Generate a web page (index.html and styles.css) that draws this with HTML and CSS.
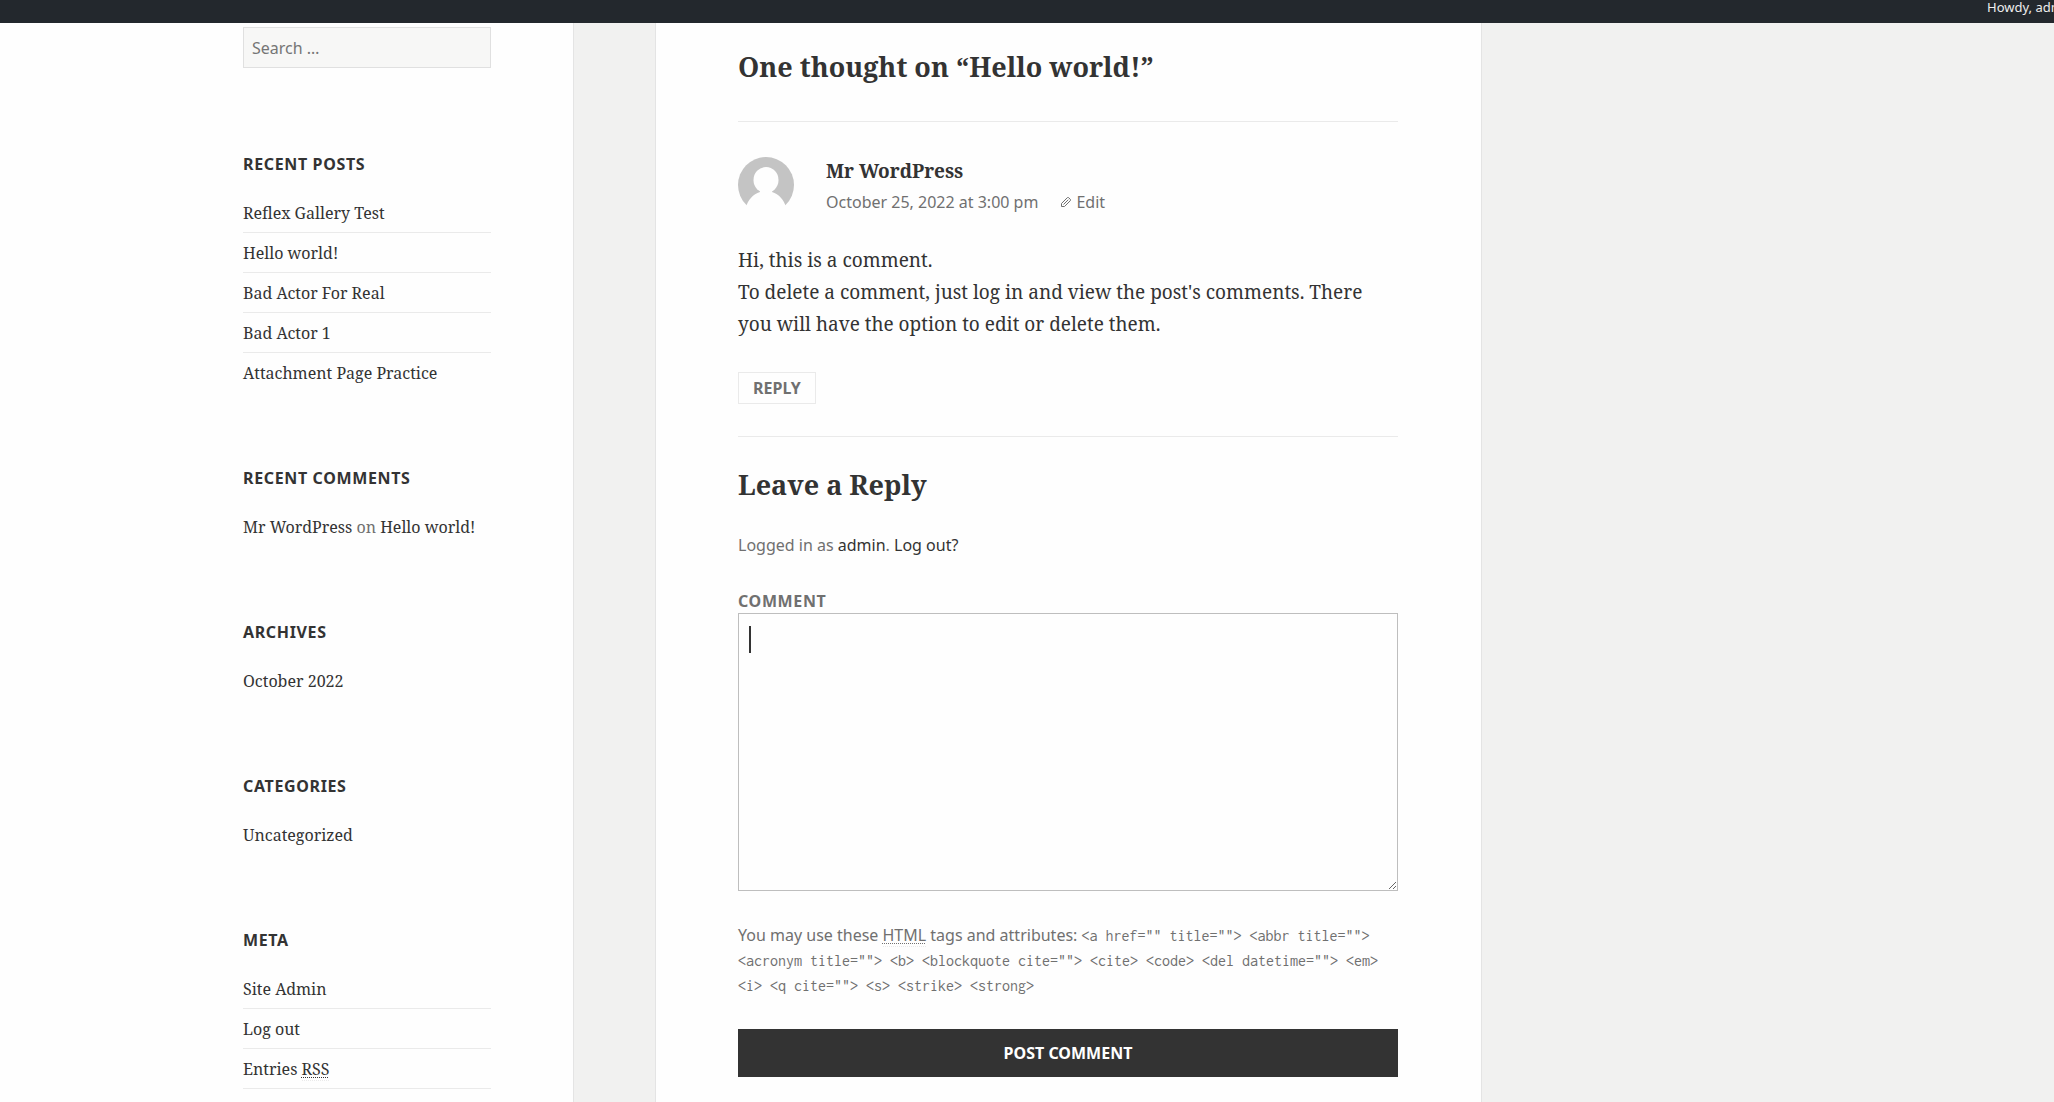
FILE: index.html
```html
<!DOCTYPE html>
<html lang="en">
<head>
<meta charset="utf-8">
<title>Hello world!</title>
<link rel="stylesheet" href="styles.css">
</head>
<body>
<header class="admin-bar"><a class="account" href="#">Howdy, admin</a></header>
<div class="site">
  <aside class="sidebar">
    <form class="search"><input class="search-field" type="search" placeholder="Search …" aria-label="Search for:"></form>
    <section class="widget">
      <h2 class="widget-title">Recent Posts</h2>
      <ul class="widget-list">
        <li><a href="#">Reflex Gallery Test</a></li>
        <li><a href="#">Hello world!</a></li>
        <li><a href="#">Bad Actor For Real</a></li>
        <li><a href="#">Bad Actor 1</a></li>
        <li><a href="#">Attachment Page Practice</a></li>
      </ul>
    </section>
    <section class="widget">
      <h2 class="widget-title">Recent Comments</h2>
      <ul class="widget-list">
        <li><a href="#">Mr WordPress</a> on <a href="#">Hello world!</a></li>
      </ul>
    </section>
    <section class="widget">
      <h2 class="widget-title">Archives</h2>
      <ul class="widget-list">
        <li><a href="#">October 2022</a></li>
      </ul>
    </section>
    <section class="widget">
      <h2 class="widget-title">Categories</h2>
      <ul class="widget-list">
        <li><a href="#">Uncategorized</a></li>
      </ul>
    </section>
    <section class="widget">
      <h2 class="widget-title">Meta</h2>
      <ul class="widget-list widget-list-open">
        <li><a href="#">Site Admin</a></li>
        <li><a href="#">Log out</a></li>
        <li><a href="#">Entries <abbr>RSS</abbr></a></li>
      </ul>
    </section>
  </aside>
  <main class="content">
    <h2 class="section-title">One thought on “Hello world!”</h2>
    <article class="comment">
      <header class="comment-meta">
        <svg class="avatar" viewBox="0 0 56 56" aria-hidden="true">
          <circle cx="28" cy="28" r="28" fill="#c4c4c4"/>
          <ellipse cx="28" cy="23" rx="12.500" ry="13" fill="#fefefe"/>
          <path d="M22 32h12v3c7 2 12 8 14 15l-6 6H14l-6-6c2-7 7-13 14-15z" fill="#fefefe"/>
        </svg>
        <div class="comment-byline">
          <b class="author">Mr WordPress</b>
          <div class="comment-info">
            <a href="#">October 25, 2022 at 3:00 pm</a>
            <a class="edit" href="#"><svg class="pencil" viewBox="0 0 12 12" aria-hidden="true"><path d="M1.500 10.500V7.500L7.300 1.700q.7-.7 1.400 0l1.600 1.600q.7.700 0 1.400L4.500 10.500zM3.500 8.500L8.300 3.700" fill="none" stroke="#707070"/></svg>Edit</a>
          </div>
        </div>
      </header>
      <p class="comment-text">Hi, this is a comment.<br>To delete a comment, just log in and view the post's comments. There you will have the option to edit or delete them.</p>
      <a class="reply" href="#">Reply</a>
    </article>
    <form class="respond">
      <h3 class="reply-title">Leave a Reply</h3>
      <p class="logged-in">Logged in as <a href="#">admin</a>. <a href="#">Log out?</a></p>
      <label class="comment-label" for="comment">Comment</label>
      <div class="comment-field"><textarea class="comment-box" id="comment"></textarea><span class="caret"></span></div>
      <p class="allowed">You may use these <abbr>HTML</abbr> tags and attributes: <code>&lt;a href="" title=""&gt; &lt;abbr title=""&gt; &lt;acronym title=""&gt; &lt;b&gt; &lt;blockquote cite=""&gt; &lt;cite&gt; &lt;code&gt; &lt;del datetime=""&gt; &lt;em&gt; &lt;i&gt; &lt;q cite=""&gt; &lt;s&gt; &lt;strike&gt; &lt;strong&gt;</code></p>
      <button class="submit" type="button">Post Comment</button>
    </form>
  </main>
</div>
</body>
</html>
```
FILE: styles.css
```css
*, *::before, *::after { box-sizing: border-box; }

html, body { height: 100%; }

body {
  display: flex;
  flex-direction: column;
  margin: 0;
  overflow: hidden;
  background: #f1f1f0;
  color: #333;
  font: 16px/24px "Noto Serif", "DejaVu Serif Condensed", "DejaVu Serif", serif;
}

a { color: inherit; text-decoration: none; }
h2, h3, p, ul { margin: 0; padding: 0; }

abbr {
  border-bottom: 1px dotted #eaeaea;
  text-decoration: underline dotted 1px;
  text-decoration-skip-ink: none;
  text-underline-offset: 2px;
}

.admin-bar {
  display: flex;
  flex: none;
  justify-content: flex-end;
  height: 23px;
  overflow: hidden;
  background: #23282d;
}

.account {
  width: 67px;
  color: #eee;
  font: 13px/14px "Noto Sans", sans-serif;
  white-space: nowrap;
}

.site {
  display: grid;
  flex: 1;
  grid-template-columns: 574fr 81fr 827fr 572fr;
  min-height: 0;
}

.sidebar {
  padding: 4px 82px 0 243px;
  border-right: 1px solid #e4e4e4;
  background: #fefefe;
}

.search-field {
  display: block;
  width: 100%;
  height: 41px;
  margin: 0 0 84px;
  padding: 0 8px;
  border: 1px solid #e0e0e0;
  border-radius: 0;
  background: #f7f7f6;
  font: 16px/24px "Noto Sans", sans-serif;
}
.search-field::placeholder { color: #757575; }

.widget + .widget { margin-top: 81px; }

.widget-title {
  margin-bottom: 25px;
  font: bold 16px/24px "Noto Sans", sans-serif;
  letter-spacing: 0.04em;
  text-transform: uppercase;
}

.widget-list { color: #707070; list-style: none; }
.widget-list a { color: #333; }
.widget-list li + li {
  margin-top: 7px;
  padding-top: 8px;
  border-top: 1px solid #eaeaea;
}
.widget-list-open { padding-bottom: 7px; border-bottom: 1px solid #eaeaea; }

.content {
  grid-column: 3;
  padding: 26px 83px 0 82px;
  border: 1px solid #e4e4e4;
  border-width: 0 1px;
  background: #fefefe;
}

.section-title, .reply-title { font-size: 27px; line-height: 36px; }
.section-title { margin-bottom: 36px; }

.comment { border-top: 1px solid #eaeaea; padding: 35px 0 32px; }
.comment-meta { display: flex; gap: 32px; height: 56px; }
.avatar { width: 56px; height: 56px; }
.author { display: block; font-size: 19px; line-height: 28px; }

.comment-info {
  display: flex;
  gap: 22px;
  margin-top: 5px;
  color: #707070;
  font-family: "Noto Sans", sans-serif;
}

.edit { display: flex; gap: 4px; align-items: center; }
.pencil { width: 12px; height: 12px; }

.comment-text { margin: 31px 0 32px; font-size: 19px; line-height: 32px; }

.reply {
  display: inline-block;
  padding: 3px 14px;
  border: 1px solid #eaeaea;
  color: #707070;
  font: bold 16px/24px "Noto Sans", sans-serif;
  text-transform: uppercase;
}

.respond { border-top: 1px solid #eaeaea; padding-top: 30px; }
.logged-in, .comment-label, .allowed { color: #707070; font-family: "Noto Sans", sans-serif; }
.logged-in { margin: 30px 0 32px; }
.logged-in a { color: #333; }

.comment-label {
  display: block;
  font-weight: bold;
  letter-spacing: 0.04em;
  text-transform: uppercase;
}

.comment-field { position: relative; }

.comment-box {
  display: block;
  width: 100%;
  height: 278px;
  padding: 12px 11px;
  border: 1px solid #bebebe;
  background: #fefefe;
  font: 16px/24px "Noto Sans", sans-serif;
  resize: vertical;
}

.caret {
  position: absolute;
  top: 13px;
  left: 11px;
  width: 2px;
  height: 27px;
  background: #333;
}

.allowed { margin: 32px 0 31px; }
.allowed code { font: 16px/24px "Inconsolata", "Liberation Mono", monospace; }

.submit {
  display: block;
  width: 100%;
  height: 48px;
  border: 0;
  background: #333;
  color: #fff;
  font: bold 16px/24px "Noto Sans", sans-serif;
  text-transform: uppercase;
}
```
